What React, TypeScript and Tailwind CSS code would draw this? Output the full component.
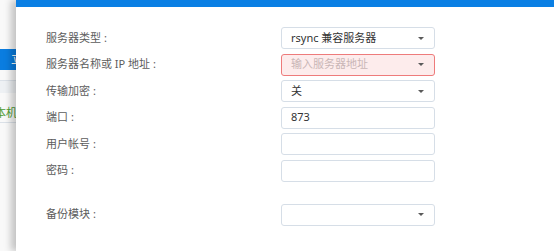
import React from 'react';

type Field = {
  label: string;
  kind: 'select' | 'text';
  value?: string;
  placeholder?: string;
  invalid?: boolean;
  gapBefore?: boolean;
};

const fields: Field[] = [
  { label: '服务器类型', kind: 'select', value: 'rsync 兼容服务器' },
  { label: '服务器名称或 IP 地址', kind: 'select', placeholder: '输入服务器地址', invalid: true },
  { label: '传输加密', kind: 'select', value: '关' },
  { label: '端口', kind: 'text', value: '873' },
  { label: '用户帐号', kind: 'text' },
  { label: '密码', kind: 'text' },
  { label: '备份模块', kind: 'select', gapBefore: true },
];

function Caret() {
  return (
    <svg width="6" height="3" viewBox="0 0 6 3" className="shrink-0">
      <path d="M0 0 H6 L3 3 Z" fill="#5a5a5a" />
    </svg>
  );
}

function FieldRow({ field }: { field: Field }) {
  const box = field.invalid
    ? 'border-[#ee7b7b] bg-[#fdecec]'
    : 'border-[#d6dee7] bg-white';
  return (
    <div className={`flex items-center ${field.gapBefore ? 'mt-[22px]' : 'mt-[4.5px]'} first:mt-0`}>
      <div className="w-[235px] text-[11px] text-[#5c5c5c]">
        {field.label}
        <span className="ml-[3px]">:</span>
      </div>
      <div className={`flex items-center h-[22px] w-[154px] rounded-[3px] border pl-[9px] pr-[10px] ${box}`}>
        <span className={`flex-1 text-[11px] ${field.value ? 'text-[#333]' : 'text-[#c9b6b6]'}`}>
          {field.value ?? field.placeholder ?? ''}
        </span>
        {field.kind === 'select' && <Caret />}
      </div>
    </div>
  );
}

export default function App() {
  return (
    <div
      className="flex w-[554px] h-[251px] overflow-hidden bg-white"
      style={{ fontFamily: '"Noto Sans", "Noto Sans CJK SC", sans-serif' }}
    >
      {/* page behind the dialog */}
      <div className="w-[16px] shrink-0 overflow-hidden bg-[#f9f9f9]">
        <div className="h-[49px]" />
        <div className="h-[21px] w-[40px] bg-[#0a7de0] text-white text-[12px] leading-[21px] pl-[11px] whitespace-nowrap">
          立即
        </div>
        <div className="h-[10px]" />
        <div className="h-[13px] border-t border-[#dbe1e8] bg-[#eef1f4]" />
        <div className="h-[30px] border-b border-[#dbe1e8] flex items-end pb-[1px] whitespace-nowrap">
          <span className="text-[11px] text-[#4a9b2f] -ml-[5px]">本机备份</span>
        </div>
      </div>

      {/* dialog */}
      <div className="flex-1 flex flex-col bg-white shadow-[-5px_0_7px_rgba(0,0,0,0.22)] z-10">
        <div className="h-[7px] bg-[#0a7fe4]" />
        <div className="pt-[20px] pl-[30px] flex flex-col">
          {fields.map((f) => (
            <FieldRow key={f.label} field={f} />
          ))}
        </div>
      </div>
    </div>
  );
}
